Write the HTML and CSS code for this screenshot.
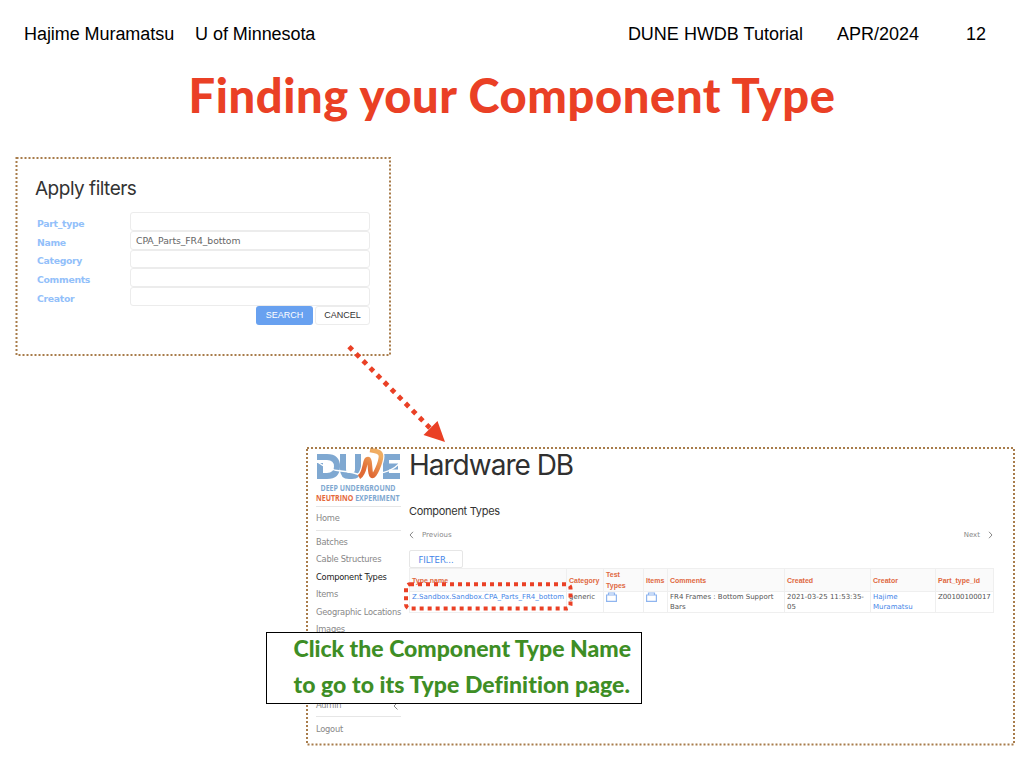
FILE: index.html
```html
<!DOCTYPE html>
<html lang="en">
<head>
<meta charset="utf-8">
<title>Finding your Component Type</title>
<link rel="stylesheet" href="styles.css">
</head>
<body>
<main class="slide">
  <header class="topline">
    <span class="author">Hajime Muramatsu</span><span class="school">U of Minnesota</span>
    <span class="deck">DUNE HWDB Tutorial</span><span class="date">APR/2024</span><span class="page">12</span>
  </header>
  <h1 class="title"><span>Finding your Component Type</span></h1>

  <section class="panel filters">
    <h2 class="filters-title"><span>Apply filters</span></h2>
    <div class="row"><label>Part_type</label><div class="field"></div></div>
    <div class="row"><label>Name</label><div class="field"><span>CPA_Parts_FR4_bottom</span></div></div>
    <div class="row"><label>Category</label><div class="field"></div></div>
    <div class="row"><label>Comments</label><div class="field"></div></div>
    <div class="row"><label>Creator</label><div class="field"></div></div>
    <div class="actions"><span class="btn search">SEARCH</span><span class="btn cancel">CANCEL</span></div>
  </section>

  <section class="panel hwdb">
    <nav class="side">
      <svg class="logo" viewBox="0 0 84 54" width="84" height="54">
        <defs>
          <linearGradient id="flame" x1="0" y1="1" x2="0.6" y2="0"><stop offset="0.3" stop-color="#e06a35"/><stop offset="1" stop-color="#f0ad62"/></linearGradient>
        </defs>
        <g fill="none" stroke="#7fa8d1" stroke-width="6">
          <path d="M1 7H11Q21 7 21 16.5T11 26H4V13"/>
          <path d="M27 4V19Q27 26 33 26H36Q42 26 42 19V4"/>
          <path d="M84 7H70V26H84M70 16.5H82"/>
        </g>
        <path d="M0 11Q12 20 25 21T46 26M62 23Q74 23 84 13" fill="none" stroke="#fff" stroke-width="1.3"/>
        <path d="M43 27C50 23 48 9 52 9C55 9 53 26 56.5 26C59 26 65 12 65 6C65 2 61 1 54 0" fill="none" stroke="#fff" stroke-width="7"/>
        <path d="M43 27C50 23 48 9 52 9C55 9 53 26 56.5 26C59 26 65 12 65 6C65 2 61 1 54 0" fill="none" stroke="url(#flame)" stroke-width="4.6"/>
        <text class="logo-text" x="4.5" y="40.5" textLength="75" lengthAdjust="spacingAndGlyphs" fill="#7fa8d1">DEEP UNDERGROUND</text>
        <text class="logo-text" x="0" y="51" textLength="83.5" lengthAdjust="spacingAndGlyphs" fill="#7fa8d1"><tspan fill="#e5683b">NEUTRINO</tspan> EXPERIMENT</text>
      </svg>
      <a class="home">Home</a>
      <div class="menu">
        <a>Batches</a><a>Cable Structures</a><a class="current">Component Types</a><a>Items</a><a>Geographic Locations</a><a>Images</a>
      </div>
      <a class="admin">Admin <svg width="5" height="8" viewBox="0 0 5 8"><path d="M4.5 .5L1 4L4.5 7.5" fill="none" stroke="#888"/></svg></a>
      <a class="logout">Logout</a>
    </nav>
    <div class="content">
      <h2 class="app"><span>Hardware DB</span></h2>
      <h3 class="heading"><span>Component Types</span></h3>
      <div class="pager">
        <span><svg width="5" height="8" viewBox="0 0 5 8"><path d="M4 .8L1 4L4 7.2" fill="none" stroke="#888"/></svg>Previous</span>
        <span>Next<svg width="5" height="8" viewBox="0 0 5 8"><path d="M1 .8L4 4L1 7.2" fill="none" stroke="#888"/></svg></span>
      </div>
      <div class="filter-btn">FILTER...</div>
      <table class="types">
        <colgroup><col class="c1"><col class="c2"><col class="c3"><col class="c4"><col class="c5"><col class="c6"><col class="c7"><col class="c8"></colgroup>
        <tr class="head"><th>Type name</th><th>Category</th><th>Test<br>Types</th><th>Items</th><th>Comments</th><th>Created</th><th>Creator</th><th>Part_type_id</th></tr>
        <tr class="body"><td class="link">Z.Sandbox.Sandbox.CPA_Parts_FR4_bottom</td><td>generic</td>
          <td><svg class="case" width="11" height="10" viewBox="0 0 11 10"><path d="M.6 3H10.4V9.4H.6ZM2.5 2.6V1H8.5V2.6" fill="none" stroke="#8fb5ef" stroke-width="1.2"/></svg></td>
          <td><svg class="case" width="11" height="10" viewBox="0 0 11 10"><path d="M.6 3H10.4V9.4H.6ZM2.5 2.6V1H8.5V2.6" fill="none" stroke="#8fb5ef" stroke-width="1.2"/></svg></td>
          <td>FR4 Frames : Bottom Support<br>Bars</td><td>2021-03-25 11:53:35-<br>05</td><td class="link">Hajime<br>Muramatsu</td><td class="id">Z00100100017</td></tr>
      </table>
    </div>
  </section>

  <svg class="marks" width="1024" height="768" viewBox="0 0 1024 768">
    <g fill="none" stroke="#a87c4b" stroke-width="2" stroke-dasharray="2 2">
      <rect x="16.5" y="158" width="373.5" height="197"/>
      <rect x="307" y="448" width="707" height="296.5"/>
    </g>
    <g fill="none" stroke="#ea4025">
      <path d="M349 346.6L432 430" stroke-width="4.8" stroke-dasharray="4.8 5.2"/>
      <rect x="406" y="584.2" width="164.5" height="24.4" rx="4" stroke-width="4" stroke-dasharray="4 4"/>
    </g>
    <path d="M445 442L423.5 435L437.5 421Z" fill="#ea4025"/>
  </svg>

  <aside class="callout"><span>Click the Component Type Name</span><span class="second">to go to its Type Definition page.</span></aside>
</main>
</body>
</html>
```
FILE: styles.css
```css
* { box-sizing: border-box; }
body { margin: 0; background: #fff; }
h1, h2, h3 { margin: 0; font-weight: 400; }
.slide { position: relative; width: 1024px; height: 768px; overflow: hidden; font-family: "DejaVu Sans", sans-serif; }

.topline { display: flex; padding: 24px 38px 0 24px; height: 63px; font: 18px/21px "Liberation Sans", sans-serif; color: #000; }
.author, .school { letter-spacing: -0.06px; }
.school { margin-left: 21px; margin-right: auto; }
.date { margin-left: 34px; }
.page { margin-left: 47px; }

.title { text-align: center; font: 900 47px/64px Lato, sans-serif; letter-spacing: 0.62px; color: #ea4025; white-space: nowrap; }

.panel { position: absolute; background: #fff; }
.filters { left: 16px; top: 157px; width: 375px; height: 199px; padding: 19px 21px 0; }
.filters-title { font: 19px/24px Inter, sans-serif; letter-spacing: -0.5px; color: #333; height: 36px; margin-left: -2px; padding-top: 1px; }
.row { display: flex; align-items: center; height: 18.8px; }
.row label { width: 93px; padding-top: 4px; font-size: 9.3px; letter-spacing: -0.3px; font-weight: 700; color: #92c0fa; }
.field { flex: 1; height: 18.8px; border: 1px solid #ececec; border-radius: 3px; padding-left: 5px; font-size: 9.3px; letter-spacing: -0.1px; line-height: 17px; color: #666; }
.actions { display: flex; justify-content: flex-end; gap: 2px; }
.btn { height: 19px; border-radius: 3px; font: 9px/19px "Liberation Sans", sans-serif; text-align: center; }
.search { width: 57px; background: #68a1f0; color: #fff; }
.cancel { width: 55px; border: 1px solid #ececec; line-height: 17px; color: #333; }

.hwdb { display: flex; left: 306px; top: 447px; width: 709px; height: 299px; padding: 3px 22px 0 10px; }
.side { display: flex; flex-direction: column; width: 85px; font-size: 8.3px; letter-spacing: -0.24px; line-height: 17.45px; color: #888; white-space: nowrap; }
.logo { display: block; overflow: visible; }
.logo-text { font: 700 8px "Open Sans", sans-serif; letter-spacing: 0; }
.home { border-top: 1px solid #e6e6e6; border-bottom: 1px solid #e6e6e6; height: 25px; margin-top: 2px; line-height: 23px; }
.menu { display: flex; flex-direction: column; padding-top: 3px; }
.current { color: #222; }
.admin { display: flex; justify-content: space-between; align-items: center; margin-top: 58px; padding-right: 3px; height: 20px; border-bottom: 1px solid #e6e6e6; }
.logout { line-height: 24px; }

.content { flex: 1; padding-left: 8px; min-width: 0; }
.app { font: 28px/32px Inter, sans-serif; letter-spacing: -1px; color: #303030; height: 53px; margin-top: -1px; }
.heading { font: 11px/18px Inter, sans-serif; letter-spacing: -0.3px; color: #333; }
.pager { display: flex; justify-content: space-between; align-items: flex-start; height: 30px; padding-top: 9px; font-size: 7px; line-height: 12px; color: #888; }
.pager span { display: flex; gap: 8px; align-items: center; height: 12px; }
.filter-btn { width: 54px; height: 18px; border: 1px solid #e6e6e6; border-radius: 2px; font-size: 8.5px; line-height: 18px; text-align: center; color: #4585e8; }
.types { border-collapse: collapse; table-layout: fixed; width: 584px; font-size: 7px; line-height: 10px; color: #555; }
.types th, .types td { border: 1px solid #efefef; padding: 0 0 0 2px; text-align: left; vertical-align: top; white-space: nowrap; }
.types th { height: 22px; vertical-align: middle; background: #fafafa; color: #e0683f; font: 700 7px/11px "Liberation Sans", sans-serif; }
.types td { height: 21px; }
.types .link { color: #4585e8; }
.types .id { letter-spacing: -0.1px; }
.case { display: block; }
.c1 { width: 157px; } .c2 { width: 37px; } .c3 { width: 40px; } .c4 { width: 24px; }
.c5 { width: 117px; } .c6 { width: 86px; } .c7 { width: 65px; } .c8 { width: 58px; }

.marks { position: absolute; left: 0; top: 0; }
.callout { position: absolute; left: 265.5px; top: 632px; width: 376px; height: 72px; border: 1px solid #000; background: #fff; padding-left: 27px; display: flex; flex-direction: column; font: 900 23px/36px Lato, sans-serif; color: #3e8e25; white-space: nowrap; }
.callout span { margin-top: -3px; margin-bottom: 3px; }
.callout .second { letter-spacing: 0.07px; }
```
